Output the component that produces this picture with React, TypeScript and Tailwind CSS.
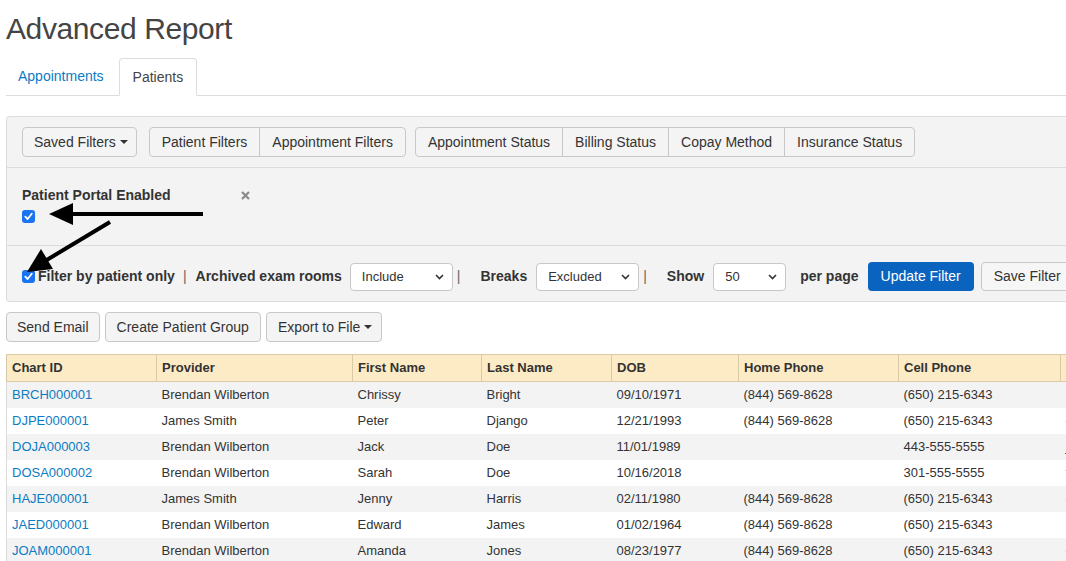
import React from "react";

const font = { fontFamily: '"Liberation Sans", Arial, sans-serif' };

interface PatientRow {
  chartId: string;
  provider: string;
  firstName: string;
  lastName: string;
  dob: string;
  homePhone: string;
  cellPhone: string;
  email: string;
}

const rows: PatientRow[] = [
  { chartId: "BRCH000001", provider: "Brendan Wilberton", firstName: "Chrissy", lastName: "Bright", dob: "09/10/1971", homePhone: "(844) 569-8628", cellPhone: "(650) 215-6343", email: "" },
  { chartId: "DJPE000001", provider: "James Smith", firstName: "Peter", lastName: "Django", dob: "12/21/1993", homePhone: "(844) 569-8628", cellPhone: "(650) 215-6343", email: "css@example.com" },
  { chartId: "DOJA000003", provider: "Brendan Wilberton", firstName: "Jack", lastName: "Doe", dob: "11/01/1989", homePhone: "", cellPhone: "443-555-5555", email: "jack@example.com" },
  { chartId: "DOSA000002", provider: "Brendan Wilberton", firstName: "Sarah", lastName: "Doe", dob: "10/16/2018", homePhone: "", cellPhone: "301-555-5555", email: "test@example.com" },
  { chartId: "HAJE000001", provider: "James Smith", firstName: "Jenny", lastName: "Harris", dob: "02/11/1980", homePhone: "(844) 569-8628", cellPhone: "(650) 215-6343", email: "css@example.com" },
  { chartId: "JAED000001", provider: "Brendan Wilberton", firstName: "Edward", lastName: "James", dob: "01/02/1964", homePhone: "(844) 569-8628", cellPhone: "(650) 215-6343", email: "" },
  { chartId: "JOAM000001", provider: "Brendan Wilberton", firstName: "Amanda", lastName: "Jones", dob: "08/23/1977", homePhone: "(844) 569-8628", cellPhone: "(650) 215-6343", email: "css@example.com" },
];

const Caret = () => (
  <span className="inline-block ml-[4px] align-middle border-t-[4px] border-x-[4px] border-t-[#333] border-x-transparent"></span>
);

const Checkbox = () => (
  <span className="inline-flex items-center justify-center w-[13px] h-[13px] rounded-[3px] bg-[#1a73f0] shrink-0">
    <svg width="9" height="9" viewBox="0 0 10 10">
      <path d="M1.5 5.2 L4 7.8 L8.6 2" fill="none" stroke="white" strokeWidth="2" strokeLinecap="round" strokeLinejoin="round" />
    </svg>
  </span>
);

const FakeSelect: React.FC<{ value: string; width: string }> = ({ value, width }) => (
  <div className={`${width} h-[28px] flex items-center justify-between bg-white border border-[#c8c8c8] rounded-[4px] pl-[11px] pr-[8px] text-[13px] text-[#333] shrink-0`}>
    <span>{value}</span>
    <svg width="9" height="6" viewBox="0 0 9 6">
      <path d="M1 1 L4.5 4.5 L8 1" fill="none" stroke="#333" strokeWidth="1.6" />
    </svg>
  </div>
);

const Sep = ({ className }: { className: string }) => (
  <span className={`text-[14px] text-[#666] ${className}`}>|</span>
);

const btn = "h-[30px] flex items-center text-[14px] text-[#333] bg-[#f4f4f4] border border-[#c8c8c8]";

export default function App() {
  return (
    <div className="relative w-[1066px] h-[561px] overflow-hidden bg-white" style={font}>
      <div className="w-[1300px] pl-[6px]">
        <h1 className="pt-[11px] text-[30px] leading-[36px] text-[#444] tracking-[-0.4px]">Advanced Report</h1>

        {/* tabs */}
        <div className="mt-[11px] flex items-start border-b border-[#ddd] text-[14px]">
          <div className="px-3 pt-[9px] pb-[10px] leading-[18px] text-[#0b7cc4] mr-[3px]">Appointments</div>
          <div className="px-[13px] pt-[9px] pb-[9px] leading-[18px] text-[#444] bg-white border border-[#ddd] border-b-white rounded-t-[4px] -mb-px">Patients</div>
        </div>

        {/* filter panel */}
        <div className="mt-[20px] bg-[#f3f3f3] border border-[#dcdcdc] rounded-l-[3px]">
          <div className="px-[15px] py-[10px] flex items-center">
            <div className={`${btn} pl-[11px] pr-[8px] rounded-[4px]`}>Saved Filters<Caret /></div>
            <div className="flex ml-[12px]">
              <div className={`${btn} px-3 rounded-l-[4px]`}>Patient Filters</div>
              <div className={`${btn} px-3 -ml-px rounded-r-[4px]`}>Appointment Filters</div>
            </div>
            <div className="flex ml-[9px]">
              <div className={`${btn} px-3 rounded-l-[4px]`}>Appointment Status</div>
              <div className={`${btn} px-3 -ml-px`}>Billing Status</div>
              <div className={`${btn} px-3 -ml-px`}>Copay Method</div>
              <div className={`${btn} px-3 -ml-px rounded-r-[4px]`}>Insurance Status</div>
            </div>
          </div>

          <div className="border-t border-[#dcdcdc] h-[78px] px-[15px] pt-[17px]">
            <div className="flex items-center">
              <span className="w-[219px] text-[14px] font-bold leading-[20px] text-[#333]">Patient Portal Enabled</span>
              <svg width="9" height="9" viewBox="0 0 9 9">
                <path d="M1 1 L8 8 M8 1 L1 8" stroke="#8a8a8a" strokeWidth="2.2" />
              </svg>
            </div>
            <div className="mt-[5px] flex">
              <Checkbox />
            </div>
          </div>

          <div className="border-t border-[#dcdcdc] px-[15px] pt-[16px] pb-[10px] flex items-center text-[14px] font-bold text-[#333]">
            <Checkbox />
            <span className="ml-[3px]">Filter by patient only</span>
            <Sep className="ml-[8px] font-normal" />
            <span className="ml-[9px]">Archived exam rooms</span>
            <div className="ml-[8px] font-normal"><FakeSelect value="Include" width="w-[103px]" /></div>
            <Sep className="ml-[4px] font-normal" />
            <span className="ml-[20px]">Breaks</span>
            <div className="ml-[9px] font-normal"><FakeSelect value="Excluded" width="w-[103px]" /></div>
            <Sep className="ml-[4px] font-normal" />
            <span className="ml-[20px]">Show</span>
            <div className="ml-[9px] font-normal"><FakeSelect value="50" width="w-[73px]" /></div>
            <span className="ml-[14px]">per page</span>
            <div className="ml-[9px] h-[29px] px-[13px] flex items-center bg-[#0b63c0] text-white font-normal rounded-[4px]">Update Filter</div>
            <div className="ml-[7px] h-[29px] px-[12px] flex items-center bg-[#f6f6f6] border border-[#c8c8c8] text-[#333] font-normal rounded-[4px]">Save Filter</div>
          </div>
        </div>

        {/* action buttons */}
        <div className="mt-[10px] flex gap-[5px]">
          <div className={`${btn} px-[10px] rounded-[4px]`}>Send Email</div>
          <div className={`${btn} px-[11px] rounded-[4px]`}>Create Patient Group</div>
          <div className={`${btn} pl-[11px] pr-[9px] rounded-[4px]`}>Export to File<Caret /></div>
        </div>

        {/* table */}
        <table className="mt-[12px] table-fixed border-collapse text-[13px] text-[#333] w-[1254px]">
          <colgroup>
            <col className="w-[150px]" />
            <col className="w-[196px]" />
            <col className="w-[129px]" />
            <col className="w-[130px]" />
            <col className="w-[127px]" />
            <col className="w-[160px]" />
            <col className="w-[162px]" />
            <col className="w-[200px]" />
          </colgroup>
          <thead>
            <tr className="bg-[#fdebc6] h-[27px]">
              {["Chart ID", "Provider", "First Name", "Last Name", "DOB", "Home Phone", "Cell Phone", "Email"].map((h) => (
                <th key={h} className="text-left font-bold px-[5px] border border-[#dcc9a6] border-l-[#d4c6ad]">{h}</th>
              ))}
            </tr>
          </thead>
          <tbody>
            {rows.map((r, i) => (
              <tr key={r.chartId} className={`h-[26px] ${i % 2 === 0 ? "bg-[#f3f3f3]" : "bg-white"}`}>
                <td className="px-[5px] text-[#0b7cc4] border-l border-[#dcdcdc]">{r.chartId}</td>
                <td className="px-[5px]">{r.provider}</td>
                <td className="px-[5px]">{r.firstName}</td>
                <td className="px-[5px]">{r.lastName}</td>
                <td className="px-[5px]">{r.dob}</td>
                <td className="px-[5px]">{r.homePhone}</td>
                <td className="px-[5px]">{r.cellPhone}</td>
                <td className="px-[5px]">{r.email}</td>
              </tr>
            ))}
          </tbody>
        </table>
      </div>

      {/* annotation arrows */}
      <svg className="absolute inset-0 pointer-events-none" width="1066" height="561">
        <line x1="203" y1="214" x2="70" y2="214" stroke="black" strokeWidth="4" />
        <polygon points="49,214 73,203 73,225" fill="black" />
        <line x1="110" y1="222" x2="45" y2="261" stroke="black" strokeWidth="4" />
        <polygon points="27,272 41,249 53,269" fill="black" />
      </svg>
    </div>
  );
}
